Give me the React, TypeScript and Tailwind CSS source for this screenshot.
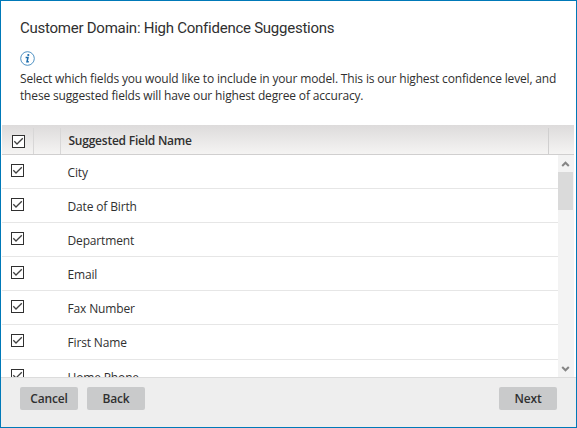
const fields = ['City', 'Date of Birth', 'Department', 'Email', 'Fax Number', 'First Name', 'Home Phone'];

function Checkbox() {
  return (
    <svg className="block shrink-0" width="13" height="13" viewBox="0 0 13 13" fill="none">
      <rect x="0.5" y="0.5" width="12" height="12" fill="#fff" stroke="#303030" />
      <path d="M2.3 6.3 5 9 10.8 3.2" stroke="#404040" strokeWidth="1.3" />
    </svg>
  );
}

function InfoIcon() {
  return (
    <svg className="block" width="15" height="15" viewBox="0 0 15 15" fill="none">
      <circle cx="7.5" cy="7.5" r="6.8" stroke="#3c86bc" strokeWidth="0.9" />
      <circle cx="8.3" cy="4" r="1.1" fill="#1c6cab" />
      <path d="M5.6 6.4H8L7 10.8H8.8" stroke="#1c6cab" strokeWidth="1.5" />
    </svg>
  );
}

function Chevron({ up }: { up?: boolean }) {
  return (
    <svg className="block" width="15" height="17" viewBox="0 0 15 17" fill="none">
      <path d={up ? 'M4.2 11 7.5 7.7 10.8 11' : 'M4.2 7 7.5 10.3 10.8 7'} stroke="#858585" strokeWidth="2" />
    </svg>
  );
}

function Button({ label }: { label: string }) {
  return (
    <button className="h-[23px] w-[58px] rounded-[2px] bg-[#c9cacb] text-[12px] leading-[23px] font-semibold tracking-[-0.15px] text-[#303030]">
      {label}
    </button>
  );
}

export default function App() {
  return (
    <div className="flex h-[428px] w-[577px] flex-col border border-[#0079b8] bg-white font-['Open_Sans',sans-serif] text-[12px] text-[#303030]">
      <header className="h-[124px] shrink-0 pt-[16px] pl-[19px]">
        <h1 className="font-[Roboto,sans-serif] text-[15px] leading-[22px] tracking-[-0.25px]">
          Customer Domain: High Confidence Suggestions
        </h1>
        <div className="mt-[12px]">
          <InfoIcon />
        </div>
        <p className="mt-[4px] leading-[17px] tracking-[-0.16px] whitespace-nowrap">
          Select which fields you would like to include in your model. This is our highest confidence level, and
          <br />
          these suggested fields will have our highest degree of accuracy.
        </p>
      </header>
      <div className="mr-[2px] ml-px flex h-[30px] shrink-0 border-b border-[#d0cfcf] bg-linear-to-b from-[#dddbdb] to-[#f5f4f3] font-semibold">
        <div className="mt-[3px] w-[32px] border-r border-[#d8d7d7] pt-[7px] pl-[10px]">
          <Checkbox />
        </div>
        <div className="mt-[3px] w-[27px] border-r border-[#d8d7d7]" />
        <div className="mt-[3px] flex-1 border-r border-[#d0cfcf] pl-[7.5px] leading-[26px] tracking-[-0.23px]">
          Suggested Field Name
        </div>
        <div className="w-[25px]" />
      </div>
      <main className="mr-[2px] ml-px flex h-[222px] shrink-0 overflow-hidden">
        <div className="flex-1">
          {fields.map((name) => (
            <div key={name} className="flex h-[34px] border-b border-[#e6e6e6] nth-[6]:h-[35px]">
              <div className="w-[65.5px] pt-[9px] pl-[9px]">
                <Checkbox />
              </div>
              <span className="leading-[35px] tracking-[-0.15px]">{name}</span>
            </div>
          ))}
        </div>
        <div className="flex w-[16px] flex-col bg-[#f3f3f3]">
          <Chevron up />
          <div className="h-[38px] w-[15px] bg-[#dadada]" />
          <div className="flex-1" />
          <Chevron />
        </div>
      </main>
      <footer className="flex flex-1 gap-[9px] border-t border-[#dcdcdc] bg-[#eeeeee] px-[19px] pt-[9px]">
        <Button label="Cancel" />
        <Button label="Back" />
        <div className="flex-1" />
        <Button label="Next" />
      </footer>
    </div>
  );
}
